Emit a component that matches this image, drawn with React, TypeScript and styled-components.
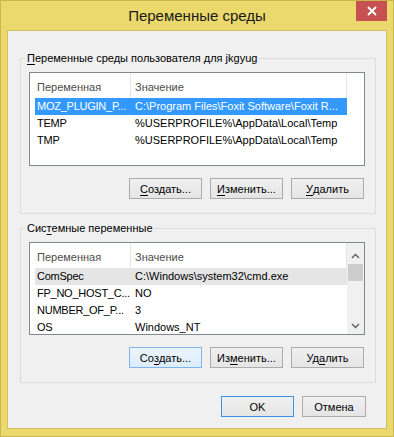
import React from "react";
import styled, { createGlobalStyle } from "styled-components";

const GlobalStyle = createGlobalStyle`
  html, body {
    margin: 0;
    padding: 0;
    background: #ffffff;
  }
  * {
    box-sizing: border-box;
  }
`;

const FONT = `"Liberation Sans", "Noto Sans", Arial, sans-serif`;
const TEXT_SIZE = 11;

interface Row {
  name: string;
  value: string;
}

const userVars: Row[] = [
  { name: "MOZ_PLUGIN_P...", value: "C:\\Program Files\\Foxit Software\\Foxit R..." },
  { name: "TEMP", value: "%USERPROFILE%\\AppData\\Local\\Temp" },
  { name: "TMP", value: "%USERPROFILE%\\AppData\\Local\\Temp" },
];

const systemVars: Row[] = [
  { name: "ComSpec", value: "C:\\Windows\\system32\\cmd.exe" },
  { name: "FP_NO_HOST_C...", value: "NO" },
  { name: "NUMBER_OF_P...", value: "3" },
  { name: "OS", value: "Windows_NT" },
];

const Window = styled.div`
  width: 394px;
  height: 437px;
  background: #ebd96d;
  border: 1px solid #c9b752;
  padding: 0 6px 7px 6px;
  display: flex;
  flex-direction: column;
  font-family: ${FONT};
  color: #000;
`;

const TitleBar = styled.div`
  height: 29px;
  display: grid;
  grid-template-columns: 1fr auto 1fr;
  align-items: start;
`;

const Title = styled.div`
  grid-column: 2;
  font-size: 15px;
  line-height: 20px;
  padding-top: 5px;
  color: #1a1a1a;
`;

const CloseButton = styled.div`
  grid-column: 3;
  justify-self: end;
  width: 31px;
  height: 20px;
  background: #c75050;
  display: flex;
  align-items: center;
  justify-content: center;
`;

const Content = styled.div`
  flex: 1;
  background: #f0f0f0;
  border: 1px solid #d3c262;
  padding: 19px 10px 0 12px;
  display: flex;
  flex-direction: column;
`;

const Group = styled.fieldset<{ $gap?: number }>`
  margin: ${(p) => p.$gap ?? 0}px 0 0 0;
  border: 1px solid #dcdcdc;
  padding: 6px 10px 14px 8px;
  min-width: 0;
`;

const Legend = styled.legend`
  font-size: ${TEXT_SIZE}px;
  line-height: 16px;
  padding: 0 2px;
  margin-left: -4px;
  color: #000;
`;

const U = styled.span`
  text-decoration: underline;
  text-underline-offset: 2px;
`;

const ListView = styled.div<{ $height: number }>`
  height: ${(p) => p.$height}px;
  border: 1px solid #828790;
  background: #fff;
  display: flex;
  overflow: hidden;
`;

const ListMain = styled.div`
  flex: 1;
  min-width: 0;
  display: flex;
  flex-direction: column;
`;

const Columns = styled.div`
  display: grid;
  grid-template-columns: 96px 216px;
  margin-left: 5px;
  width: 312px;
`;

const Header = styled(Columns)`
  height: 25px;
  flex-shrink: 0;
`;

const HeaderCell = styled.div<{ $pad: number }>`
  border-right: 1px solid #e5e5e5;
  font-size: ${TEXT_SIZE}px;
  line-height: 16px;
  padding: 6px 0 0 ${(p) => p.$pad}px;
  color: #4c4c4c;
  white-space: nowrap;
  overflow: hidden;
`;

const ItemRow = styled(Columns)<{ $state?: "selected" | "hover" }>`
  height: 17px;
  flex-shrink: 0;
  background: ${(p) =>
    p.$state === "selected" ? "#3399ff" : p.$state === "hover" ? "#e5e5e5" : "transparent"};
  color: ${(p) => (p.$state === "selected" ? "#fff" : "#000")};
`;

const Cell = styled.div<{ $pad: number; $tight?: boolean }>`
  font-size: ${TEXT_SIZE}px;
  line-height: 17px;
  padding-left: ${(p) => p.$pad}px;
  letter-spacing: ${(p) => (p.$tight ? "-0.25px" : "normal")};
  white-space: nowrap;
  overflow: hidden;
`;

const ScrollBar = styled.div`
  width: 17px;
  flex-shrink: 0;
  background: #f0f0f0;
  display: flex;
  flex-direction: column;
  align-items: center;
`;

const ScrollArrow = styled.div<{ $offset?: number }>`
  height: 17px;
  width: 17px;
  margin-top: ${(p) => p.$offset ?? 0}px;
  display: flex;
  align-items: center;
  justify-content: center;
  flex-shrink: 0;
`;

const Thumb = styled.div`
  width: 15px;
  height: 17px;
  background: #cdcdcd;
`;

const ScrollTrack = styled.div`
  flex: 1;
`;

const ButtonRow = styled.div<{ $top: number; $right?: number }>`
  display: flex;
  justify-content: flex-end;
  gap: 8px;
  margin-top: ${(p) => p.$top}px;
  margin-right: ${(p) => p.$right ?? 1}px;
`;

const Button = styled.div<{ $width?: number; $variant?: "hover" | "default" }>`
  width: ${(p) => p.$width ?? 73}px;
  height: 21px;
  display: flex;
  align-items: center;
  justify-content: center;
  font-size: ${TEXT_SIZE}px;
  line-height: 16px;
  border: 1px solid
    ${(p) => (p.$variant === "hover" ? "#7eb4ea" : p.$variant === "default" ? "#3c94e6" : "#acacac")};
  background: ${(p) =>
    p.$variant === "hover"
      ? "linear-gradient(#ecf4fc, #dcecfc)"
      : "linear-gradient(#f0f0f0, #e5e5e5)"};
  color: #000;
`;

const Chevron = ({ down }: { down?: boolean }) => (
  <svg width="9" height="6" viewBox="0 0 9 6">
    <path
      d={down ? "M1 1 L4.5 4.5 L8 1" : "M1 5 L4.5 1.5 L8 5"}
      fill="none"
      stroke="#606060"
      strokeWidth="1.4"
    />
  </svg>
);

function List({
  rows,
  height,
  state,
  scroll,
}: {
  rows: Row[];
  height: number;
  state: "selected" | "hover";
  scroll?: boolean;
}) {
  return (
    <ListView $height={height}>
      <ListMain>
        <Header>
          <HeaderCell $pad={2}>Переменная</HeaderCell>
          <HeaderCell $pad={4}>Значение</HeaderCell>
        </Header>
        {rows.map((r, i) => (
          <ItemRow key={r.name} $state={i === 0 ? state : undefined}>
            <Cell $pad={2} $tight>
              {r.name}
            </Cell>
            <Cell $pad={4}>{r.value}</Cell>
          </ItemRow>
        ))}
      </ListMain>
      {scroll && (
        <ScrollBar>
          <ScrollArrow $offset={4}>
            <Chevron />
          </ScrollArrow>
          <Thumb />
          <ScrollTrack />
          <ScrollArrow>
            <Chevron down />
          </ScrollArrow>
        </ScrollBar>
      )}
    </ListView>
  );
}

export default function App() {
  return (
    <>
      <GlobalStyle />
      <Window>
        <TitleBar>
          <Title>Переменные среды</Title>
          <CloseButton>
            <svg width="10" height="10" viewBox="0 0 10 10">
              <path d="M1 1 L9 9 M9 1 L1 9" stroke="#fff" strokeWidth="2" />
            </svg>
          </CloseButton>
        </TitleBar>
        <Content>
          <Group>
            <Legend>
              <U>П</U>еременные среды пользователя для jkgyug
            </Legend>
            <List rows={userVars} height={94} state="selected" />
            <ButtonRow $top={12}>
              <Button>
                <U>С</U>оздать...
              </Button>
              <Button>
                <U>И</U>зменить...
              </Button>
              <Button>
                <U>У</U>далить
              </Button>
            </ButtonRow>
          </Group>
          <Group $gap={6}>
            <Legend>
              Сис<U>т</U>емные переменные
            </Legend>
            <List rows={systemVars} height={93} state="hover" scroll />
            <ButtonRow $top={12}>
              <Button $variant="hover">
                Со<U>з</U>дать...
              </Button>
              <Button>
                Из<U>м</U>енить...
              </Button>
              <Button>
                Уд<U>а</U>лить
              </Button>
            </ButtonRow>
          </Group>
          <ButtonRow $top={13} $right={10}>
            <Button $width={73} $variant="default">
              OK
            </Button>
            <Button $width={64}>Отмена</Button>
          </ButtonRow>
        </Content>
      </Window>
    </>
  );
}
